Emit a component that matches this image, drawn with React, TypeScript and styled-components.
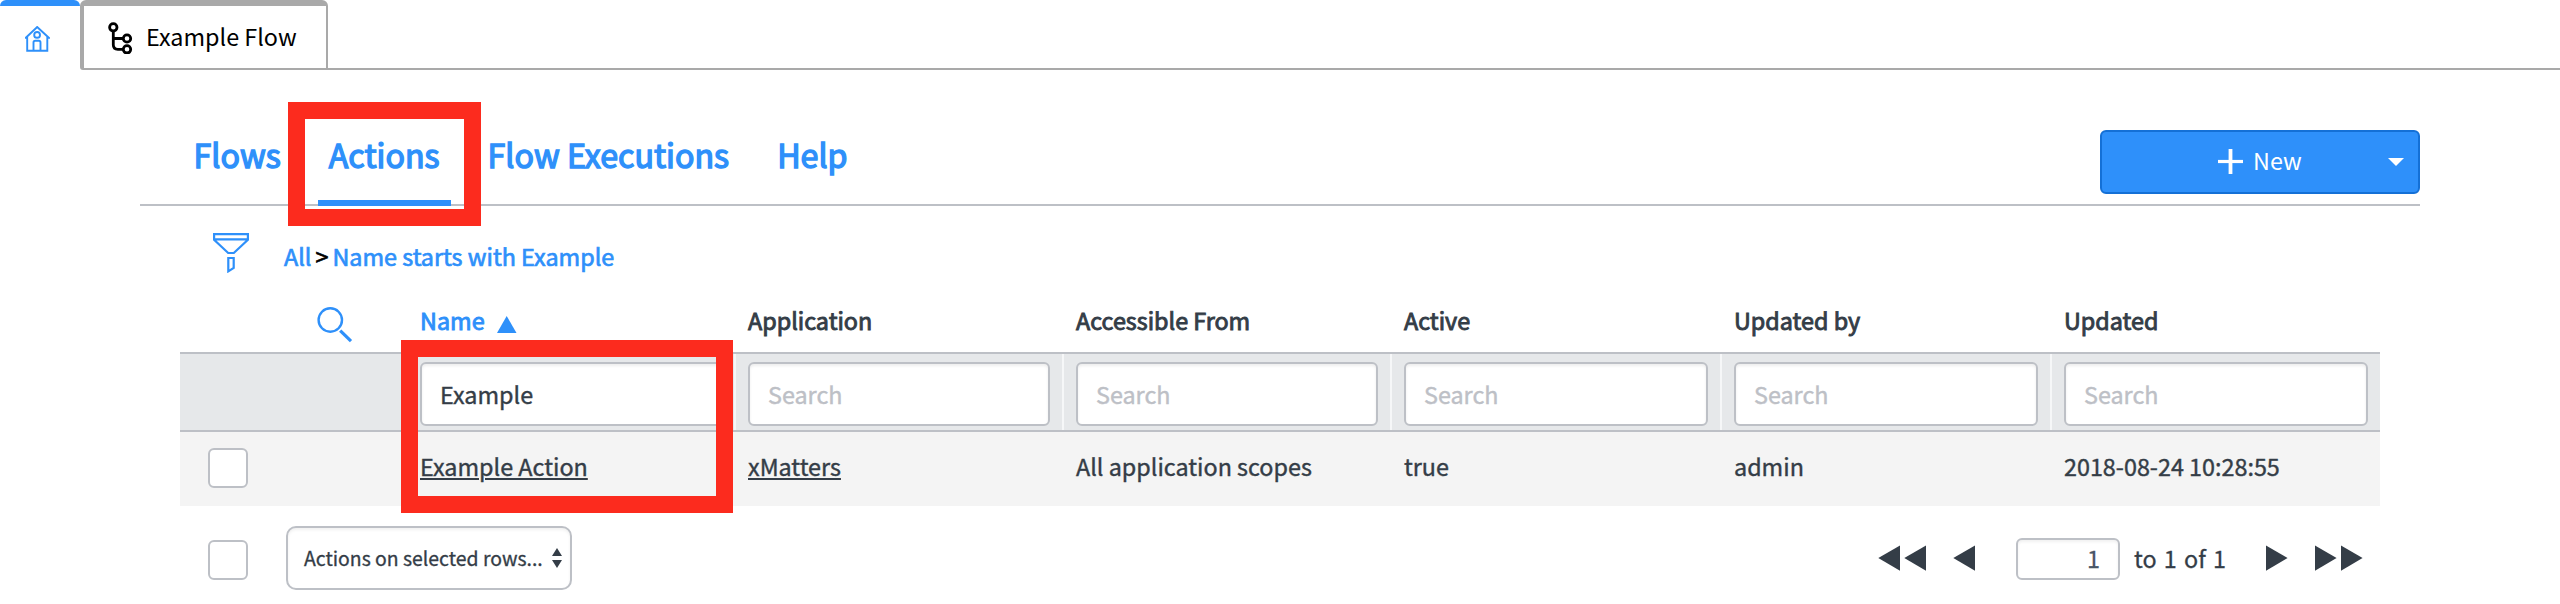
import React from 'react';
import styled, { createGlobalStyle, css } from 'styled-components';

const blue = '#2e90fa';
const ink = '#343d47';
const line = '#bdc0c6';

const Global = createGlobalStyle`
  *, *::before, *::after { box-sizing: border-box; }
  body { margin: 0; background: #fff; }
`;

const Page = styled.div`
  position: relative;
  height: 604px;
  overflow: hidden;
  background: #fff;
  color: ${ink};
  font: 400 23.35px/32px 'Noto Sans CJK SC', sans-serif;
`;

/* Window tabs */
const TabStrip = styled.div`
  display: flex;
  height: 70px;
`;
const HomeTab = styled.div`
  display: flex;
  align-items: flex-start;
  width: 80px;
  padding: 20px 0 0 25px;
  border-top: 6px solid ${blue};
  border-radius: 6px 6px 0 0;
`;
const FlowTab = styled.div`
  display: flex;
  align-items: flex-start;
  width: 248px;
  padding: 14px 0 0 24px;
  border: solid #a9a9a9;
  border-width: 6px 2px 2px 4px;
  border-radius: 6px 6px 0 3px;
  color: #000;
`;
const FlowTabLabel = styled.span`
  margin-left: 12px;
`;
const StripRest = styled.div`
  flex: 1;
  border-bottom: 2px solid #a9a9a9;
`;

/* Section navigation */
const Nav = styled.nav`
  display: flex;
  align-items: flex-start;
  height: 136px;
  margin: 0 140px;
  padding-left: 42.600px;
  border-bottom: 2px solid ${line};
`;
const NavLinks = styled.div`
  display: flex;
  gap: 26px;
  padding-top: 38px;
`;
const NavLink = styled.a<{ $active?: boolean }>`
  height: 98px;
  padding: 0 11px;
  border-bottom: 6px solid ${p => (p.$active ? blue : 'transparent')};
  color: ${blue};
  font-size: 32.2px;
  line-height: 92px;
  white-space: nowrap;
  -webkit-text-stroke: 1.4px ${blue};
`;
const NewButton = styled.button`
  display: flex;
  align-items: center;
  width: 320px;
  height: 64px;
  margin: 60px 0 0 auto;
  padding: 0 14px 0 116px;
  border: 2px solid #1470d6;
  border-radius: 6px;
  background: ${blue};
  color: #fff;
  font: inherit;
`;
const NewLabel = styled.span`
  margin: -4px auto 0 10px;
`;

/* Filter breadcrumb */
const FilterBar = styled.div`
  display: flex;
  align-items: center;
  height: 98px;
  padding-left: 213px;
  svg { margin: -4px 35px 0 0; }
`;
const Crumbs = styled.div`
  display: flex;
  gap: 4px;
  padding-top: 2px;
  color: #000;
  -webkit-text-stroke: 0.7px currentColor;
`;
const Crumb = styled.a`
  color: ${blue};
`;

/* Table */
const Table = styled.div`
  width: 2200px;
  margin-left: 180px;
`;
const rowGrid = css`
  display: grid;
  grid-template-columns: 228px 328px 328px 328px 330px 330px 328px;
`;
const HeadRow = styled.div`
  ${rowGrid}
  height: 48px;
`;
const HeadCell = styled.div<{ $sorted?: boolean }>`
  display: flex;
  padding-left: 12px;
  color: ${p => (p.$sorted ? blue : ink)};
  -webkit-text-stroke: 0.9px currentColor;
  svg { margin: 12px 0 0 12px; }
`;
const SearchToggle = styled.div`
  padding: 3px 0 0 137px;
`;
const FilterRow = styled.div`
  ${rowGrid}
  height: 80px;
  border: solid ${line};
  border-width: 2px 0;
  background: #e6e8ea;
`;
const FilterCell = styled.div`
  padding: 8px 12px 0;
  border-right: 2px solid #f6f7f8;
  &:last-child { border-right: 0; }
`;
const FilterInput = styled.input`
  display: block;
  width: 100%;
  height: 64px;
  padding: 0 18px;
  border: 2px solid ${line};
  border-radius: 6px;
  outline: 0;
  background: #fff;
  box-shadow: inset 0 2px 3px rgba(0, 0, 0, 0.07);
  color: ${ink};
  font: inherit;
  -webkit-text-stroke: 0.4px currentColor;
  &::placeholder { color: ${line}; opacity: 1; }
`;
const DataRow = styled.div`
  ${rowGrid}
  align-items: center;
  height: 74px;
  background: #f4f4f4;
`;
const DataCell = styled.div`
  margin-top: -6px;
  padding-left: 12px;
  -webkit-text-stroke: 0.4px currentColor;
`;
const LinkText = styled.a`
  text-decoration: underline;
  text-decoration-thickness: 2px;
  text-underline-offset: 2px;
`;
const Checkbox = styled.div`
  width: 40px;
  height: 40px;
  margin: -2px 0 0 28px;
  border: 2px solid ${line};
  border-radius: 6px;
  background: #fff;
`;

/* Footer */
const Footer = styled.div`
  display: flex;
  align-items: center;
  height: 64px;
  margin: 20px 17px 0 0;
  ${Checkbox} { margin-top: 4px; }
`;
const BulkSelect = styled.div`
  display: flex;
  align-items: center;
  justify-content: space-between;
  width: 286px;
  height: 64px;
  margin: 0 auto 0 38px;
  padding: 0 8px 0 16px;
  border: 2px solid ${line};
  border-radius: 10px;
  box-shadow: inset 0 2px 3px rgba(0, 0, 0, 0.06);
  font-size: 19.4px;
  white-space: nowrap;
  -webkit-text-stroke: 0.3px currentColor;
`;
const PageArrows = styled.div<{ $gap: number }>`
  display: flex;
  gap: 4px;
  margin-left: ${p => p.$gap}px;
`;
const PageInput = styled.div`
  width: 104px;
  height: 42px;
  margin: 2px 0 0 41px;
  padding: 2px 18px 0 0;
  border: 2px solid ${line};
  border-radius: 6px;
  box-shadow: inset 0 2px 3px rgba(0, 0, 0, 0.06);
  color: #485566;
  text-align: right;
  -webkit-text-stroke: 0.3px currentColor;
`;
const PageText = styled.div`
  width: 92px;
  margin: 0 0 0 14px;
  white-space: nowrap;
  word-spacing: 2px;
  -webkit-text-stroke: 0.3px currentColor;
`;

/* Red call-out frames lying over the page */
const Callout = styled.div<{ $x: number; $y: number; $w: number; $h: number }>`
  position: absolute;
  left: ${p => p.$x}px;
  top: ${p => p.$y}px;
  width: ${p => p.$w}px;
  height: ${p => p.$h}px;
  border: 17px solid #fc2b1e;
  pointer-events: none;
`;

const HomeIcon = () => (
  <svg width="25" height="26" viewBox="0 0 25 26" fill="none" stroke={blue} strokeWidth="1.9">
    <path d="M.8 11.8 12.2 1l11.6 10.8h-1.5v13H2.2v-13z" />
    <circle cx="12.1" cy="8.9" r="2.9" />
    <path d="M8.5 24.8v-8.3q0-1.7 1.7-1.7h3.6q1.7 0 1.7 1.7v8.3" />
  </svg>
);
const FlowIcon = () => (
  <svg width="26" height="34" viewBox="0 0 26 34" fill="none" stroke="#000" strokeWidth="2.8">
    <circle cx="5.3" cy="7.3" r="3.7" />
    <circle cx="19" cy="18.5" r="3.7" />
    <circle cx="19" cy="29.3" r="3.7" />
    <path d="M5.3 11v13.8q0 4.5 4.5 4.5h5.5M5.3 18.5h10" />
  </svg>
);
const FunnelIcon = () => (
  <svg width="36" height="40" viewBox="0 0 36 40" fill="none" stroke={blue} strokeWidth="2.2">
    <path d="M1.1 1.1h33.8v5.7L20.8 20h-5.600L1.100 6.800z M1 6.300h34" />
    <path d="M15.300 25h5.400v9.800l-5.400 3.500z" />
  </svg>
);
const SearchIcon = () => (
  <svg width="36" height="36" viewBox="0 0 36 36" fill="none" stroke={blue}>
    <circle cx="13.300" cy="13" r="11.700" strokeWidth="2.400" />
    <path d="M23.200 23.600 34 34.200" strokeWidth="3.200" />
  </svg>
);
const Plus = () => (
  <svg width="25" height="26" viewBox="0 0 25 26" stroke="#fff">
    <path d="M12.500 0v25" strokeWidth="3.800" />
    <path d="M0 12.500h25" strokeWidth="3.200" />
  </svg>
);
const CaretDown = () => (
  <svg width="16" height="8" viewBox="0 0 16 8" fill="#fff"><path d="M0 0h16L8 8z" /></svg>
);
const SortUp = () => (
  <svg width="20" height="17" viewBox="0 0 20 17" fill={blue} stroke="none"><path d="M0 17h19.500L9.700 0z" /></svg>
);
const SelectArrows = () => (
  <svg width="10" height="20" viewBox="0 0 10 20" fill={ink}><path d="M0 8h10L5 0zM0 12h10L5 20z" /></svg>
);
const Arrow = ({ back }: { back?: boolean }) => (
  <svg width="22" height="26" viewBox="0 0 22 26" fill={ink}>
    <path d={back ? 'M22 .5v25.300L.3 13.100z' : 'M0 .5v25.300l21.600-12.700z'} />
  </svg>
);

const columns = [
  { title: 'Name', value: 'Example Action', link: true, filter: 'Example' },
  { title: 'Application', value: 'xMatters', link: true },
  { title: 'Accessible From', value: 'All application scopes' },
  { title: 'Active', value: 'true' },
  { title: 'Updated by', value: 'admin' },
  { title: 'Updated', value: '2018-08-24 10:28:55' },
];

export default function App() {
  return (
    <Page>
      <Global />
      <TabStrip>
        <HomeTab><HomeIcon /></HomeTab>
        <FlowTab><FlowIcon /><FlowTabLabel>Example Flow</FlowTabLabel></FlowTab>
        <StripRest />
      </TabStrip>
      <Nav>
        <NavLinks>
          <NavLink>Flows</NavLink>
          <NavLink $active>Actions</NavLink>
          <NavLink>Flow Executions</NavLink>
          <NavLink>Help</NavLink>
        </NavLinks>
        <NewButton><Plus /><NewLabel>New</NewLabel><CaretDown /></NewButton>
      </Nav>
      <FilterBar>
        <FunnelIcon />
        <Crumbs>
          <Crumb>All</Crumb>
          <span>&gt;</span>
          <Crumb>Name starts with Example</Crumb>
        </Crumbs>
      </FilterBar>
      <Table>
        <HeadRow>
          <SearchToggle><SearchIcon /></SearchToggle>
          {columns.map((c, i) => (
            <HeadCell key={c.title} $sorted={i === 0}>{c.title}{i === 0 && <SortUp />}</HeadCell>
          ))}
        </HeadRow>
        <FilterRow>
          <div />
          {columns.map(c => (
            <FilterCell key={c.title}>
              <FilterInput placeholder="Search" defaultValue={c.filter} />
            </FilterCell>
          ))}
        </FilterRow>
        <DataRow>
          <Checkbox />
          {columns.map(c => (
            <DataCell key={c.title}>{c.link ? <LinkText>{c.value}</LinkText> : c.value}</DataCell>
          ))}
        </DataRow>
        <Footer>
          <Checkbox />
          <BulkSelect>Actions on selected rows...<SelectArrows /></BulkSelect>
          <PageArrows $gap={0}><Arrow back /><Arrow back /></PageArrows>
          <PageArrows $gap={27}><Arrow back /></PageArrows>
          <PageInput>1</PageInput>
          <PageText>to 1 of 1</PageText>
          <PageArrows $gap={40}><Arrow /></PageArrows>
          <PageArrows $gap={27}><Arrow /><Arrow /></PageArrows>
        </Footer>
      </Table>
      <Callout $x={288} $y={102} $w={193} $h={124} />
      <Callout $x={401} $y={340} $w={332} $h={173} />
    </Page>
  );
}
